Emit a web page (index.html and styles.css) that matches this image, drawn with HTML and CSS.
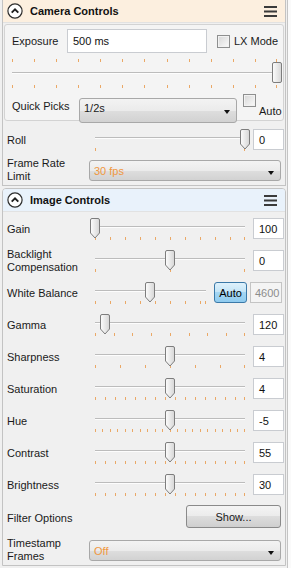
FILE: index.html
```html
<!DOCTYPE html>
<html lang="en">
<head>
    <meta charset="UTF-8">
    <meta name="viewport" content="width=device-width, initial-scale=1.0">
    <title>Camera Settings</title>
    <link rel="stylesheet" href="styles.css">
</head>
<body>
    <!-- shared drawings for the slider thumbs -->
    <svg class="defs" width="0" height="0">
        <defs>
            <linearGradient id="thumbFill" x1="0" y1="0" x2="1" y2="0">
                <stop offset="0" stop-color="#fdfdfd"/>
                <stop offset="1" stop-color="#d6d6d6"/>
            </linearGradient>
            <symbol id="thumbDown" viewBox="0 0 10 21">
                <path d="M0.5 2 Q0.5 0.5 2 0.5 H8 Q9.5 0.5 9.5 2 V15 L5 20 L0.5 15 Z" fill="url(#thumbFill)" stroke="#7d7d7d"/>
            </symbol>
            <symbol id="thumbRect" viewBox="0 0 10 21">
                <rect x="0.5" y="0.5" width="9" height="20" rx="1.5" fill="url(#thumbFill)" stroke="#7d7d7d"/>
            </symbol>
            <symbol id="collapse" viewBox="0 0 16 16">
                <circle cx="8" cy="8" r="7.1" fill="#fff" stroke="#2e2e2e" stroke-width="1.2"/>
                <path d="M4.7 9.7 L8 6.4 L11.3 9.7" fill="none" stroke="#1e1e1e" stroke-width="1.9"/>
            </symbol>
            <symbol id="menu" viewBox="0 0 13 11">
                <rect x="0" y="0" width="13" height="2" fill="#3a3a3a"/>
                <rect x="0" y="4.5" width="13" height="2" fill="#3a3a3a"/>
                <rect x="0" y="9" width="13" height="2" fill="#3a3a3a"/>
            </symbol>
        </defs>
    </svg>

    <div class="page">
        <div class="panels">

            <!-- Camera Controls -->
            <div class="group camera">
                <div class="group-head">
                    <svg class="icon-collapse"><use href="#collapse"/></svg>
                    <span class="group-title">Camera Controls</span>
                    <svg class="icon-menu"><use href="#menu"/></svg>
                </div>

                <div class="inner">
                    <div class="exp-row">
                        <span class="exp-label">Exposure</span>
                        <div class="textbox exp-input">500 ms</div>
                        <span class="check lx"></span>
                        <span class="check-text">LX Mode</span>
                    </div>

                    <div class="exp-slider">
                        <div class="ticks t22"></div>
                        <div class="track"></div>
                        <div class="ticks t22"></div>
                        <svg class="thumb rect" style="left:265px"><use href="#thumbRect"/></svg>
                    </div>

                    <div class="quick-row">
                        <span class="quick-label">Quick Picks</span>
                        <div class="combo quick">1/2s</div>
                        <span class="check auto"></span>
                        <span class="auto-text">Auto</span>
                    </div>
                </div>

                <div class="row">
                    <span class="label">Roll</span>
                    <div class="slider">
                        <div class="track"></div>
                        <div class="ticks t150"></div>
                        <svg class="thumb" style="left:150px"><use href="#thumbDown"/></svg>
                    </div>
                    <div class="textbox num">0</div>
                </div>

                <div class="row wide">
                    <span class="label">Frame Rate<br>Limit</span>
                    <div class="combo accent">30 fps</div>
                </div>
            </div>

            <!-- Image Controls -->
            <div class="group image">
                <div class="group-head">
                    <svg class="icon-collapse"><use href="#collapse"/></svg>
                    <span class="group-title">Image Controls</span>
                    <svg class="icon-menu"><use href="#menu"/></svg>
                </div>

                <div class="group-body">
                    <div class="row">
                        <span class="label">Gain</span>
                        <div class="slider">
                            <div class="track"></div>
                            <div class="ticks t15"></div>
                            <svg class="thumb" style="left:0px"><use href="#thumbDown"/></svg>
                        </div>
                        <div class="textbox num">100</div>
                    </div>

                    <div class="row">
                        <span class="label">Backlight<br>Compensation</span>
                        <div class="slider">
                            <div class="track"></div>
                            <div class="ticks t75"></div>
                            <svg class="thumb" style="left:75px"><use href="#thumbDown"/></svg>
                        </div>
                        <div class="textbox num">0</div>
                    </div>

                    <div class="row wb">
                        <span class="label">White Balance</span>
                        <div class="slider">
                            <div class="track"></div>
                            <div class="ticks t15"></div>
                            <svg class="thumb" style="left:55px"><use href="#thumbDown"/></svg>
                        </div>
                        <div class="btn-auto">Auto</div>
                        <div class="textbox num disabled">4600</div>
                    </div>

                    <div class="row">
                        <span class="label">Gamma</span>
                        <div class="slider">
                            <div class="track"></div>
                            <div class="ticks t18"></div>
                            <svg class="thumb" style="left:10px"><use href="#thumbDown"/></svg>
                        </div>
                        <div class="textbox num">120</div>
                    </div>

                    <div class="row">
                        <span class="label">Sharpness</span>
                        <div class="slider">
                            <div class="track"></div>
                            <div class="ticks t25"></div>
                            <svg class="thumb" style="left:75px"><use href="#thumbDown"/></svg>
                        </div>
                        <div class="textbox num">4</div>
                    </div>

                    <div class="row">
                        <span class="label">Saturation</span>
                        <div class="slider">
                            <div class="track"></div>
                            <div class="ticks t10"></div>
                            <svg class="thumb" style="left:75px"><use href="#thumbDown"/></svg>
                        </div>
                        <div class="textbox num">4</div>
                    </div>

                    <div class="row">
                        <span class="label">Hue</span>
                        <div class="slider">
                            <div class="track"></div>
                            <div class="ticks t7"></div>
                            <svg class="thumb" style="left:75px"><use href="#thumbDown"/></svg>
                        </div>
                        <div class="textbox num">-5</div>
                    </div>

                    <div class="row">
                        <span class="label">Contrast</span>
                        <div class="slider">
                            <div class="track"></div>
                            <div class="ticks t10"></div>
                            <svg class="thumb" style="left:75px"><use href="#thumbDown"/></svg>
                        </div>
                        <div class="textbox num">55</div>
                    </div>

                    <div class="row">
                        <span class="label">Brightness</span>
                        <div class="slider">
                            <div class="track"></div>
                            <div class="ticks t10"></div>
                            <svg class="thumb" style="left:75px"><use href="#thumbDown"/></svg>
                        </div>
                        <div class="textbox num">30</div>
                    </div>

                    <div class="row wide filter">
                        <span class="label">Filter Options</span>
                        <div class="btn-show">Show...</div>
                    </div>

                    <div class="row wide">
                        <span class="label">Timestamp<br>Frames</span>
                        <div class="combo accent">Off</div>
                    </div>
                </div>
            </div>

        </div>
        <div class="scroll"></div>
    </div>
</body>
</html>
```

FILE: styles.css
```css
/* Base */
* {
    box-sizing: border-box;
}

body {
    margin: 0;
    width: 291px;
    height: 568px;
    overflow: hidden;
    background-color: #f0f0f0;
    font-family: "Liberation Sans", Arial, sans-serif;
    font-size: 11px;
    color: #1a1a1a;
}

.defs {
    position: absolute;
    width: 0;
    height: 0;
}

.page {
    display: flex;
    height: 568px;
}

.panels {
    width: 286px;
    padding-left: 2px;
}

.scroll {
    flex: 1;
    margin-left: 1px;
    border-left: 1px solid #c4c4c4;
    background-color: #fafafa;
}

/* Groups */
.group {
    border: 1px solid #c3c3c3;
    border-radius: 4px 4px 0 0;
    background-color: #f0f0f0;
}

.group.camera {
    border-top: none;
    border-radius: 0;
    margin-bottom: 2px;
}

.group-head {
    display: flex;
    align-items: center;
    height: 23px;
    padding: 0 8px 0 4px;
    border-bottom: 1px solid #e2e2e2;
}

.camera .group-head {
    background-color: #fcefdf;
}

.image .group-head {
    background-color: #e9f2fb;
    border-radius: 3px 3px 0 0;
}

.icon-collapse {
    width: 16px;
    height: 16px;
}

.group-title {
    flex: 1;
    margin-left: 7px;
    font-weight: bold;
    font-size: 11px;
    color: #111;
}

.icon-menu {
    width: 13px;
    height: 11px;
}

.group-body {
    padding-top: 1px;
}

/* Exposure box */
.inner {
    margin: 1px 1px 3px;
    padding: 4px 0 2px 7px;
    border: 1px solid #d3d3d3;
    border-radius: 3px;
    background-color: #f4f4f4;
}

.exp-row {
    display: flex;
    align-items: center;
    height: 24px;
}

.exp-label {
    width: 55px;
}

.exp-input {
    width: 140px;
    height: 24px;
    padding-left: 5px;
}

.check {
    width: 13px;
    height: 13px;
    border: 1px solid #8e8f8f;
    background: linear-gradient(135deg, #d6d6d6, #fbfbfb);
    box-shadow: inset 0 0 0 1px #f2f2f2;
}

.check.lx {
    margin-left: 10px;
}

.check-text {
    margin-left: 4px;
}

.exp-slider {
    position: relative;
    margin: 6px 0 0 -5px;
    width: 275px;
}

.exp-slider .track {
    margin: 10px 5px 11px;
}

.quick-row {
    display: flex;
    align-items: flex-start;
    height: 25px;
    margin-top: 5px;
}

.quick-label {
    width: 67px;
    align-self: center;
}

.combo.quick {
    width: 158px;
    height: 25px;
    align-items: flex-start;
    padding-top: 3px;
}

.check.auto {
    margin: 1px 0 0 6px;
}

.auto-text {
    align-self: flex-end;
    margin-left: 3px;
    line-height: 13px;
}

/* Rows */
.row {
    display: grid;
    grid-template-columns: 80px 160px 31px;
    column-gap: 3px;
    align-items: start;
    height: 32px;
    padding: 0 3px 0 4px;
}

.camera .row {
    height: 31px;
}

.row.wb {
    grid-template-columns: 80px 121px 33px 32px;
}

.row.wide {
    grid-template-columns: 82px 192px;
    column-gap: 0;
    height: 30px;
}

.row.filter {
    height: 34px;
}

.label {
    align-self: center;
    line-height: 13px;
}

/* Sliders */
.slider {
    position: relative;
    height: 32px;
    padding-top: 13px;
}

.track {
    height: 2px;
    margin: 0 5px;
    border-top: 1px solid #bcbcbc;
    border-bottom: 1px solid #fdfdfd;
}

.slider .ticks {
    margin-top: 9px;
}

.ticks {
    height: 3px;
    margin: 0 5px;
    background:
        linear-gradient(#eaa866, #eaa866) right / 1px 100% no-repeat,
        repeating-linear-gradient(90deg, #eaa866 0 1px, transparent 1px var(--step));
}

.t7 { --step: 7.5px; }
.t10 { --step: 10px; }
.t15 { --step: 15px; }
.t18 { --step: 18.75px; }
.t22 { --step: 22.08px; }
.t25 { --step: 25px; }
.t75 { --step: 75px; }
.t150 { --step: 150px; }

.thumb {
    position: absolute;
    top: 5px;
    width: 10px;
    height: 21px;
}

.thumb.rect {
    top: 3px;
}

/* Inputs and buttons */
.textbox {
    display: flex;
    align-items: center;
    background-color: #fff;
    border: 1px solid #c9ccd1;
    color: #111;
}

.num {
    height: 21px;
    margin-top: 5px;
    padding-left: 5px;
}

.num.disabled {
    background-color: #f4f4f4;
    border-color: #c4c4c4;
    color: #8c8c8c;
    padding-left: 4px;
}

.btn-auto {
    height: 21px;
    margin-top: 5px;
    display: flex;
    align-items: center;
    justify-content: center;
    border: 1px solid #3b79a8;
    border-radius: 3px;
    background: linear-gradient(#dff1fb, #c2e4f7 50%, #a4d6f3 50%, #8fcbef);
    color: #000;
}

.combo {
    position: relative;
    display: flex;
    align-items: center;
    height: 21px;
    margin-top: 5px;
    padding-left: 4px;
    border: 1px solid #a8a8a8;
    border-radius: 3px;
    background: linear-gradient(#f3f3f3, #ebebeb 50%, #dedede 50%, #d2d2d2);
}

.combo::after {
    content: "";
    position: absolute;
    right: 6px;
    top: 50%;
    margin-top: 0;
    border-left: 3.5px solid transparent;
    border-right: 3.5px solid transparent;
    border-top: 4px solid #111;
}

.combo.quick::after {
    top: 11px;
}

.combo.accent {
    color: #f0973f;
    margin-left: 0;
}

.btn-show {
    justify-self: end;
    width: 95px;
    height: 23px;
    margin-top: 4px;
    display: flex;
    align-items: center;
    justify-content: center;
    border: 1px solid #8a8a8a;
    border-radius: 3px;
    background: linear-gradient(#f4f4f4, #ebebeb 50%, #dddddd 50%, #cfcfcf);
}
```
